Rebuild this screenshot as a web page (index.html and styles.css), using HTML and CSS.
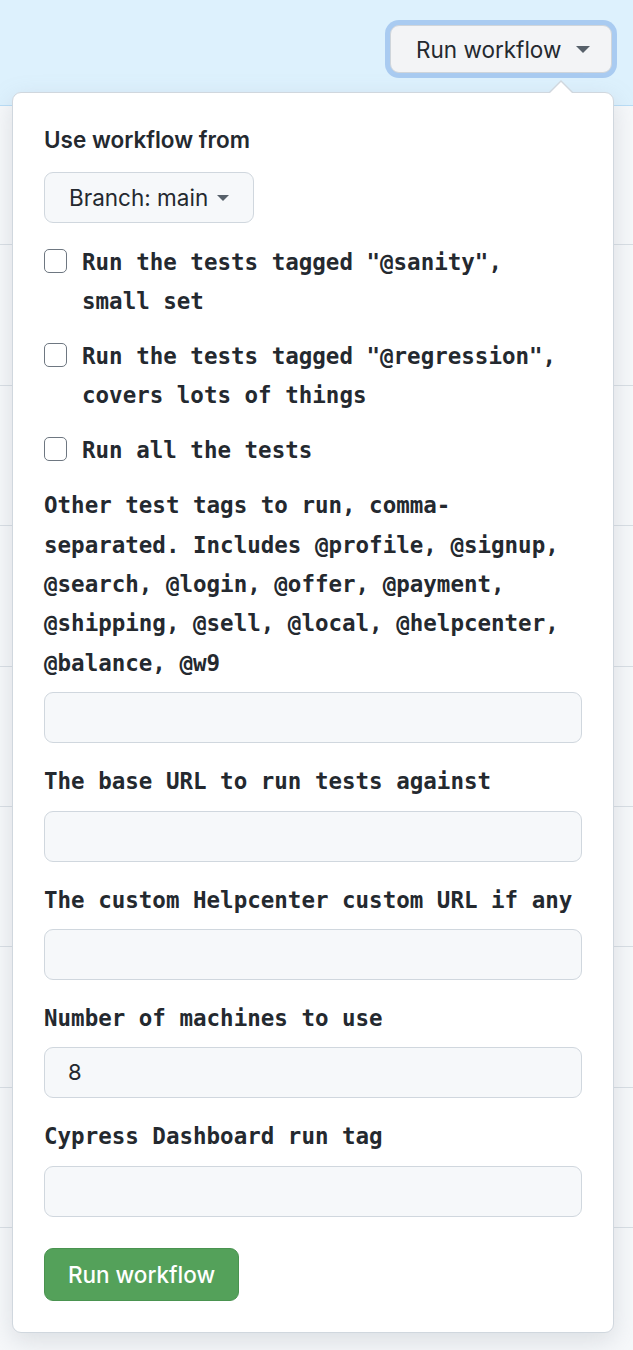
FILE: index.html
```html
<!DOCTYPE html>
<html lang="en">
<head>
<meta charset="utf-8">
<title>Run workflow</title>
<link rel="stylesheet" href="styles.css">
</head>
<body>
<div class="page">
  <header class="top">
    <button class="run-btn" type="button">Run workflow <span class="caret"></span></button>
  </header>
  <ul class="rows">
    <li class="row first"></li>
    <li class="row"></li>
    <li class="row"></li>
    <li class="row"></li>
    <li class="row"></li>
    <li class="row"></li>
    <li class="row"></li>
    <li class="row"><div class="meta"><span class="avatar"></span><span class="dots"></span></div></li>
    <li class="row"></li>
  </ul>

  <form class="popup">
    <div class="label-sans">Use workflow from</div>
    <button class="branch-btn" type="button">Branch: main <span class="caret small"></span></button>

    <div class="checks">
      <label class="check"><span class="box"></span><span class="mono">Run the tests tagged "@sanity", small set</span></label>
      <label class="check"><span class="box"></span><span class="mono">Run the tests tagged "@regression", covers lots of things</span></label>
      <label class="check"><span class="box"></span><span class="mono">Run all the tests</span></label>
    </div>

    <div class="group first-group">
      <div class="mono">Other test tags to run, comma-separated. Includes @profile, @signup, @search, @login, @offer, @payment, @shipping, @sell, @local, @helpcenter, @balance, @w9</div>
      <div class="field"></div>
    </div>
    <div class="group">
      <div class="mono">The base URL to run tests against</div>
      <div class="field"></div>
    </div>
    <div class="group">
      <div class="mono">The custom Helpcenter custom URL if any</div>
      <div class="field"></div>
    </div>
    <div class="group">
      <div class="mono">Number of machines to use</div>
      <div class="field">8</div>
    </div>
    <div class="group">
      <div class="mono">Cypress Dashboard run tag</div>
      <div class="field"></div>
    </div>

    <button class="submit-btn" type="button">Run workflow</button>
  </form>
</div>
</body>
</html>
```

FILE: styles.css
```css
* { box-sizing: border-box; }
html, body { margin: 0; padding: 0; }
body {
  background: #f6f8fa;
  font-family: Inter, "Liberation Sans", sans-serif;
  color: #24292f;
  width: 633px;
  height: 1350px;
  overflow: hidden;
}
.page { position: relative; width: 633px; height: 1350px; }

.top {
  height: 106px;
  background: #ddf1fd;
  border-bottom: 1px solid #b9ddf6;
  display: flex;
  justify-content: flex-end;
  align-items: flex-start;
  padding: 25px 21px 0 0;
}
.run-btn {
  width: 222px;
  height: 48px;
  background: #f3f4f6;
  border: 1px solid #cfd5db;
  border-radius: 9px;
  box-shadow: 0 0 0 5px #a9cbf1;
  font-family: inherit;
  font-size: 22.5px;
  font-weight: 400;
  color: #24292f;
  display: flex;
  align-items: center;
  gap: 15px;
  padding: 0 0 0 25px;
}
.caret {
  display: inline-block;
  width: 0;
  height: 0;
  border-left: 7px solid transparent;
  border-right: 7px solid transparent;
  border-top: 7px solid #57606a;
}
.caret.small {
  border-left-width: 6px;
  border-right-width: 6px;
  border-top-width: 6px;
}

.rows { list-style: none; margin: 0; padding: 0; }
.row {
  height: 140.4px;
  border-bottom: 1px solid #d8dee4;
  background: #f6f8fa;
}
.row.first { height: 139.4px; }
.meta {
  display: flex;
  align-items: flex-end;
  padding: 92px 0 0 337px;
  gap: 14px;
}
.avatar {
  width: 16px; height: 16px; border-radius: 50%;
  background: #57606a;
}
.dots {
  width: 40px;
  border-bottom: 2px dotted #c4cad0;
}

.popup {
  position: absolute;
  top: 92px;
  left: 12px;
  width: 602px;
  background: #fff;
  border: 1px solid #d0d7de;
  border-radius: 9px;
  box-shadow: 0 8px 24px rgba(140, 149, 159, 0.25);
  padding: 31px;
  margin: 0;
}
.popup::before,
.popup::after {
  content: "";
  position: absolute;
  width: 0; height: 0;
  border-left: 13px solid transparent;
  border-right: 13px solid transparent;
}
.popup::before {
  top: -13px;
  left: 535px;
  border-bottom: 13px solid #d0d7de;
}
.popup::after {
  top: -11px;
  left: 536px;
  border-left-width: 12px;
  border-right-width: 12px;
  border-bottom: 12px solid #fff;
}

.label-sans {
  font-size: 22.5px;
  line-height: 32px;
  font-weight: 600;
}
.branch-btn {
  margin-top: 16px;
  height: 51px;
  width: 210px;
  background: #f6f8fa;
  border: 1.5px solid #d0d7de;
  border-radius: 9px;
  font-family: inherit;
  font-size: 22.5px;
  color: #24292f;
  display: flex;
  align-items: center;
  gap: 9px;
  padding: 0 0 0 24px;
}

.mono {
  font-family: "DejaVu Sans Mono", "Liberation Mono", monospace;
  font-weight: 700;
  font-size: 22.5px;
  line-height: 39.3px;
  color: #24292f;
}
.checks {
  margin-top: 20px;
  display: flex;
  flex-direction: column;
  gap: 15.5px;
}
.check {
  display: flex;
  align-items: flex-start;
  gap: 15px;
}
.box {
  flex: none;
  width: 23px;
  height: 24px;
  margin-top: 5.5px;
  border: 1.5px solid #6e7781;
  border-radius: 5px;
  background: #fff;
}

.group { margin-top: 19px; }
.group.first-group { margin-top: 16px; }
.field {
  margin-top: 9px;
  height: 51px;
  background: #f6f8fa;
  border: 1.5px solid #d0d7de;
  border-radius: 9px;
  font-size: 22px;
  line-height: 48px;
  padding-left: 23px;
  color: #24292f;
}
.group.first-group .field { margin-top: 9.5px; }

.submit-btn {
  margin-top: 31px;
  height: 53px;
  width: 195px;
  background: #54a15a;
  border: 1px solid #4a9350;
  border-radius: 9px;
  color: #fff;
  font-family: inherit;
  font-size: 22.5px;
  font-weight: 500;
  padding: 0;
  display: block;
}
```
